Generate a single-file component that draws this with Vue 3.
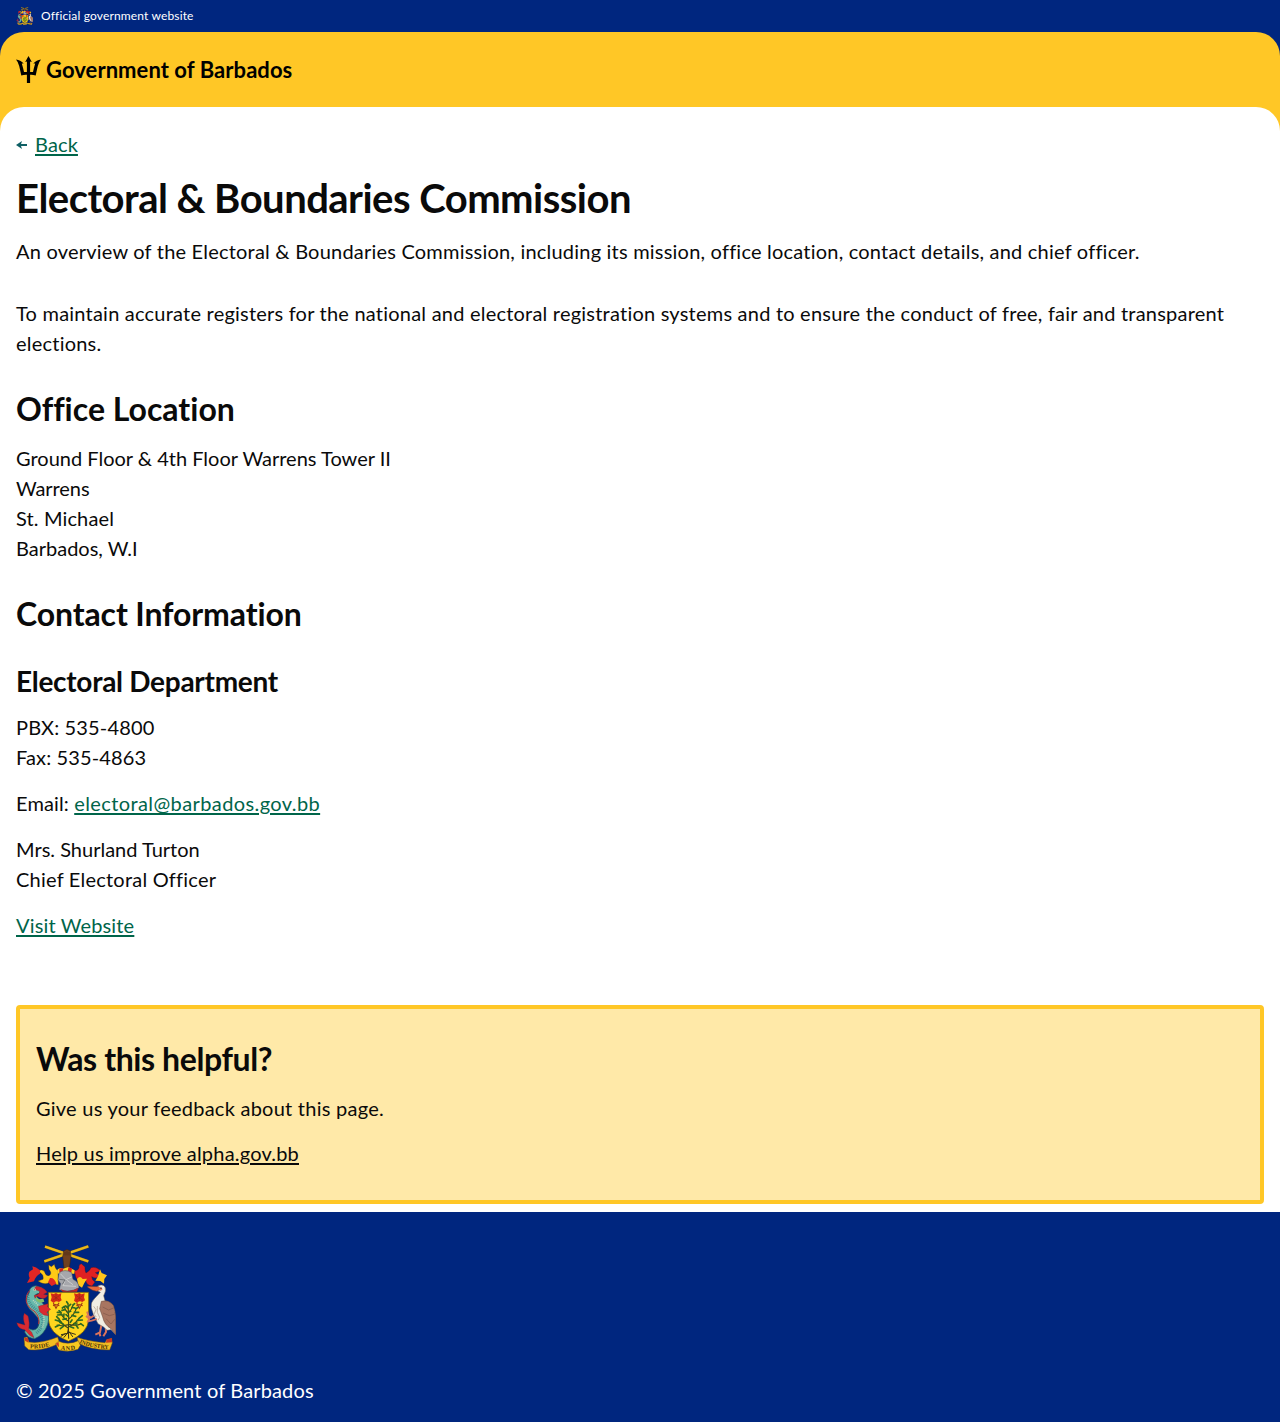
<script setup>
const address = [
  { text: 'Ground Floor & 4th Floor Warrens Tower II', spacing: 'ls-0' },
  { text: 'Warrens', spacing: 'ls-b' },
  { text: 'St. Michael', spacing: 'ls-c' },
  { text: 'Barbados, W.I', spacing: 'ls-0' },
]
</script>

<template>
  <div class="page">
    <div class="official">
      <svg class="crest-small" viewBox="24 24 300 324" aria-hidden="true"><use href="#coat-of-arms" /></svg>
      <span>Official government website</span>
    </div>

    <header class="masthead">
      <a class="brand">
        <svg class="trident" viewBox="0 0 25 27" aria-hidden="true">
          <path d="M12.5 0L15.8 6L14.1 5.6V16.1H17Q18 11.5 19.2 7.6L17.3 7.5Q20.5 3.9 25 3.5Q22.7 6.1 21.8 10Q20.8 14.2 19.7 19.6Q16.5 18.5 14.1 18.8V27H10.9V18.8Q8.5 18.5 5.3 19.6Q4.2 14.2 3.2 10Q2.3 6.1 0 3.5Q4.5 3.9 7.7 7.5L5.8 7.6Q7 11.5 8 16.1H10.9V5.6L9.2 6Z" />
        </svg>
        <span>Government of Barbados</span>
      </a>
    </header>

    <div class="sheet">
      <main>
        <div class="back">
          <svg viewBox="0 0 11 8" aria-hidden="true"><path d="M0 4L6 0L5 3H11V5H5L6 8Z" fill="#0e5f64" /></svg>
          <a class="link ls-c">Back</a>
        </div>
        <h1>Electoral &amp; Boundaries Commission</h1>
        <p class="lead">An overview of the Electoral &amp; Boundaries Commission, including its mission, office location, contact details, and chief officer.</p>
        <p class="mission">To maintain accurate registers for the national and electoral registration systems and to ensure the conduct of free, fair and transparent elections.</p>

        <h2 class="office">Office Location</h2>
        <p><span v-for="line in address" :key="line.text" class="line" :class="line.spacing">{{ line.text }}</span></p>

        <h2 class="contact">Contact Information</h2>
        <h3>Electoral Department</h3>
        <p><span class="line ls-d">PBX: 535-4800</span><span class="line ls-c">Fax: 535-4863</span></p>
        <p class="ls-c">Email: <a class="link ls-email">electoral@barbados.gov.bb</a></p>
        <p><span class="line ls-0">Mrs. Shurland Turton</span><span class="line ls-e">Chief Electoral Officer</span></p>
        <p class="ls-d"><a class="link">Visit Website</a></p>
      </main>

      <section class="helpful">
        <h2>Was this helpful?</h2>
        <p>Give us your feedback about this page.</p>
        <p><a class="link dark">Help us improve alpha.gov.bb</a></p>
      </section>
    </div>

    <footer>
      <svg class="crest" viewBox="24 24 300 324">
        <g id="coat-of-arms">
          <!-- crossed cane and arm -->
          <path d="M111 32L241 76M241 31L109 76" stroke="#7a5a10" stroke-width="9" />
          <path d="M111 32L241 76M241 31L109 76" stroke="#e9b81c" stroke-width="7" />
          <path d="M167 45Q177 36 187 45L189 62L184 96H168L164 62Z" fill="#70401f" stroke="#38200f" stroke-width="1.5" />
          <path d="M171 48V58M177 46V58M183 48V58" stroke="#38200f" stroke-width="1.5" />
          <!-- mantling, left -->
          <path d="M150 104Q142 100 139 85L130 92L122 86L123 100Q134 113 123 119Q113 121 109 106Q101 98 90 105L99 112Q108 118 105 130L90 135Q106 147 120 142L130 131Q139 145 151 147Z" fill="#ffc916" stroke="#493006" stroke-width="1" />
          <path d="M96 103Q84 93 73 91L75 100L64 107Q60 117 65 126L57 141L78 136Q83 119 96 113ZM126 126Q139 124 145 143L131 150L120 139Z" fill="#e12624" />
          <!-- mantling, right -->
          <path d="M199 104Q211 104 213 95Q211 85 220 83L231 93Q230 103 234 111Q247 103 249 95Q267 91 277 105L262 110L275 119Q267 131 251 122Q252 133 261 138L252 150Q235 148 233 133L222 137Q209 138 203 123Z" fill="#e02122" stroke="#4c1114" stroke-width="1" />
          <path d="M207 129Q216 117 224 129L237 128L229 141L222 155L211 148ZM276 100L281 111L297 118L289 129L288 143L277 135L262 134L270 121Z" fill="#ffc51a" />
          <!-- torse -->
          <path d="M148 101Q155 95 165 98L181 93Q191 98 200 103L199 113H149Z" fill="#ffd01d" />
          <path d="M154 98L166 96L164 109H154ZM181 94L192 97L190 109H179Z" fill="#dc231f" />
          <!-- helmet -->
          <path d="M153 111Q170 97 191 110L195 130Q212 137 213 155Q185 172 154 161L158 143L150 132Z" fill="#a6a7ac" stroke="#4d5157" stroke-width="1.5" />
          <path d="M158 114L174 131L191 123M171 134L165 149L204 151M177 133L195 146" fill="none" stroke="#d2d2d2" stroke-width="2.5" />
          <path d="M154 130L171 132L163 145" fill="none" stroke="#515459" stroke-width="2" />
          <path d="M158 160Q184 173 211 155L207 167H164Z" fill="#c32625" />
          <!-- shield -->
          <path d="M121 169H242V250Q240 292 181 316Q123 292 121 250Z" fill="#ffd51f" stroke="#654a06" stroke-width="2" />
          <g id="bloom">
            <path d="M128 172L137 174L144 171L151 175L160 172L158 184L161 193L153 198L144 195L137 201L128 194L131 184Z" fill="#d62a18" />
            <path d="M134 178L155 193M155 178L134 193M144 173V197" stroke="#8c2a12" stroke-width="1.5" />
            <path d="M136 201L144 217L153 200M135 209L143 206L154 209" fill="none" stroke="#a53d14" stroke-width="3.5" />
          </g>
          <use href="#bloom" x="70" />
          <!-- fig tree -->
          <path d="M181 292L182 246L180 203M181 277Q165 268 153 250M181 273Q200 266 213 247M181 255Q165 247 158 230M182 249Q198 237 204 220M180 232Q170 221 169 211M182 229Q193 218 195 207M181 266Q163 272 146 267M183 265Q204 271 220 263" fill="none" stroke="#3d441c" stroke-width="3.5" />
          <g fill="none" stroke="#2c6b22" stroke-width="5" stroke-linecap="round">
            <path d="M180 203L176 197M181 211L188 205M180 216L173 210M169 211L163 216M171 221L162 223M179 229L188 226M195 207L200 203M192 214L201 216M159 229L153 224M162 236L149 237M167 242L168 234M203 219L210 214M199 229L212 229M192 238L203 241" />
            <path d="M158 230L148 229M154 250L146 242M158 257L142 252M166 265L155 259M154 267L142 273M166 271L157 278M175 248L165 250M181 242L174 236M213 247L223 239M208 253L223 252M198 263L207 261M218 263L226 269M204 267L210 276M187 259L192 252M187 272L197 276" />
          </g>
          <path d="M181 280L179 292L160 296M181 288L168 304M181 286L182 307M183 287L194 302M183 289L202 295M172 293L159 301" fill="none" stroke="#35301a" stroke-width="3" stroke-linecap="round" />
          <!-- dolphin -->
          <path d="M64 169Q64 151 84 149L104 157L94 172Q82 173 80 181Q97 190 108 207Q128 236 119 265Q108 298 80 308Q59 307 50 288L58 274Q75 289 88 276Q98 262 90 246Q80 232 64 218Q47 197 64 169Z" fill="#68b9ac" stroke="#245d60" stroke-width="2" />
          <path d="M60 177Q58 196 74 212Q95 229 105 254Q104 276 85 291" fill="none" stroke="#448d93" stroke-width="9" stroke-dasharray="3 3" />
          <path d="M75 193Q93 207 105 231Q112 252 103 275" fill="none" stroke="#c3d9bd" stroke-width="5" stroke-dasharray="3 3" />
          <path d="M65 164Q53 176 55 197Q60 215 78 225Q97 243 92 264" fill="none" stroke="#cb3034" stroke-width="3" />
          <path d="M84 151Q98 151 110 160L118 169L107 175L119 178Q115 189 99 187L87 181L81 187L79 178Q98 175 94 165L78 160Z" fill="#cc2530" stroke="#70202b" stroke-width="1" />
          <path d="M84 181L93 190L106 188L109 197L96 201L85 194Z" fill="#81bd6a" />
          <circle cx="80" cy="161" r="3.5" fill="#f4ddbd" /><circle cx="80" cy="161" r="1.6" fill="#222" />
          <path d="M91 211L120 203L119 213L128 220L116 229L122 239L107 237L95 227ZM60 240L49 232Q43 246 51 267L26 260Q31 279 50 281L65 298L78 305L71 289L62 279Q66 261 60 240Z" fill="#d92a31" stroke="#73202b" stroke-width="1" />
          <!-- pelican -->
          <path d="M281 262L276 289L262 296M274 289L277 301M293 268L294 288L286 301" fill="none" stroke="#d9735d" stroke-width="6" />
          <path d="M269 150Q284 142 291 153Q296 163 287 179L291 194Q315 199 321 226L323 296L309 281L297 283L288 274L270 263L257 238L250 216Q247 199 259 188L277 169L267 164Z" fill="#f2eee4" stroke="#65564c" stroke-width="1.5" />
          <path d="M280 196Q303 190 317 209L323 240L323 296L309 278Q289 267 284 243L275 218Z" fill="#a87561" stroke="#674539" stroke-width="1.5" />
          <path d="M284 213L302 222L316 216M285 231L304 239L319 235M294 248L309 264L320 250" fill="none" stroke="#80574a" stroke-width="2" />
          <path d="M257 211L264 221L258 235L265 243M268 210L268 229L275 244L270 253" fill="none" stroke="#c5b6a5" stroke-width="3" />
          <path d="M239 151L272 152L280 158L266 166Q252 164 239 154Z" fill="#e76839" stroke="#813627" stroke-width="1.5" />
          <path d="M274 153Q284 151 283 160Q281 165 275 164Z" fill="#e98860" /><circle cx="279" cy="157" r="2" fill="#222" />
          <path d="M237 227L242 241L249 245L257 239M234 240L244 248L240 256L251 254L267 249" fill="none" stroke="#d9735d" stroke-width="5.5" />
          <!-- motto ribbon -->
          <path d="M48 305L58 303L63 318Q98 324 149 303L155 321Q106 347 62 341L50 330Z" fill="#f2bc22" stroke="#6a4c12" stroke-width="1.5" />
          <path d="M208 304Q238 316 291 320L296 311L311 307L313 321L305 342Q247 342 210 321Z" fill="#f2bc22" stroke="#6a4c12" stroke-width="1.5" />
          <path d="M143 323L152 316Q181 328 211 314L217 328L210 340Q181 350 152 342Z" fill="#f7c820" stroke="#6a4c12" stroke-width="1.5" />
          <path d="M49 306L60 306L62 320L51 314ZM296 310L312 307L312 319L294 320ZM143 323L152 318L153 334Z" fill="#ca3823" />
          <path id="pride" d="M66 337Q105 341 153 318" fill="none" />
          <path id="and" d="M158 341Q182 345 208 339" fill="none" />
          <path id="industry" d="M214 321Q252 338 308 339" fill="none" />
          <g class="motto">
            <text><textPath href="#pride" textLength="61">PRIDE</textPath></text>
            <text><textPath href="#and" textLength="44">AND</textPath></text>
            <text><textPath href="#industry" textLength="90" lengthAdjust="spacingAndGlyphs">INDUSTRY</textPath></text>
          </g>
        </g>
      </svg>
      <p class="ls-f">© 2025 Government of Barbados</p>
    </footer>
  </div>
</template>

<style>
body {
  background: #fff;
}
</style>

<style scoped>
.page {
  font: 400 20px/30px Lato, sans-serif;
  font-variant-ligatures: none;
  color: #0a0a0a;
  background: linear-gradient(#00267f 0 60px, #ffc726 60px 140px, #fff 140px);
}
.official {
  height: 32px;
  padding: 0 16px;
  display: flex;
  align-items: center;
  gap: 8px;
  background: #00267f;
  color: #fff;
  font-size: 12px;
  line-height: 18px;
  letter-spacing: 0.15px;
}
.crest-small {
  width: 17px;
  height: 18px;
}
.masthead {
  height: 75px;
  display: flex;
  align-items: center;
  padding: 0 16px;
  box-sizing: border-box;
  border-radius: 24px 24px 0 0;
  background: #ffc726;
}
.brand {
  display: flex;
  align-items: center;
  gap: 5px;
  color: #000;
  font-size: 22px;
  font-weight: 700;
  letter-spacing: 0.06px;
}
.trident {
  width: 25px;
  height: 27px;
}
.sheet {
  padding: 22px 16px 8px;
  border-radius: 24px 24px 0 0;
  background: #fff;
}
p,
h1,
h2,
h3 {
  margin: 0;
}
main > p + p {
  margin-top: 16px;
}
.line {
  display: block;
}
.back {
  display: flex;
  align-items: center;
  gap: 8px;
}
.back svg {
  width: 11px;
  height: 8px;
  margin-top: 2px;
}
.link {
  color: #00654a;
  text-decoration: underline;
  text-decoration-thickness: 2px;
  text-underline-offset: 2px;
}
.link.dark {
  color: #0a0a0a;
}
h1 {
  margin-top: 16px;
  font-size: 40px;
  line-height: 46px;
  letter-spacing: -0.53px;
}
h2 {
  font-size: 32px;
  line-height: 40px;
}
h3 {
  margin: 29px 0 13px;
  font-size: 28px;
  line-height: 36px;
  letter-spacing: -0.28px;
}
.lead {
  margin-top: 15px;
  letter-spacing: 0.21px;
}
main > .mission {
  margin-top: 32px;
  letter-spacing: 0.218px;
}
.office,
.contact {
  margin: 31px 0 14px;
}
.contact {
  letter-spacing: -0.12px;
}
.helpful {
  margin-top: 65px;
  padding: 30px 16px 32px;
  border: 4px solid #ffc726;
  border-radius: 4px;
  background: #ffe9a8;
  letter-spacing: 0.25px;
}
.helpful h2 {
  margin-bottom: 14px;
  letter-spacing: -0.4px;
}
.helpful p + p {
  margin-top: 15px;
  letter-spacing: 0.2px;
}
footer {
  padding: 32px 16px 17px;
  background: #00267f;
  color: #fff;
}
.crest {
  display: block;
  width: 100px;
  height: 108px;
  margin-bottom: 23px;
}
.motto {
  font: 700 18px "Liberation Serif", serif;
  fill: #493109;
}
.ls-0 { letter-spacing: 0; }
.ls-b { letter-spacing: -0.08px; }
.ls-c { letter-spacing: 0.13px; }
.ls-d { letter-spacing: 0.155px; }
.ls-e { letter-spacing: 0.22px; }
.ls-f { letter-spacing: 0.15px; }
.ls-email { letter-spacing: 0.4px; }
</style>
